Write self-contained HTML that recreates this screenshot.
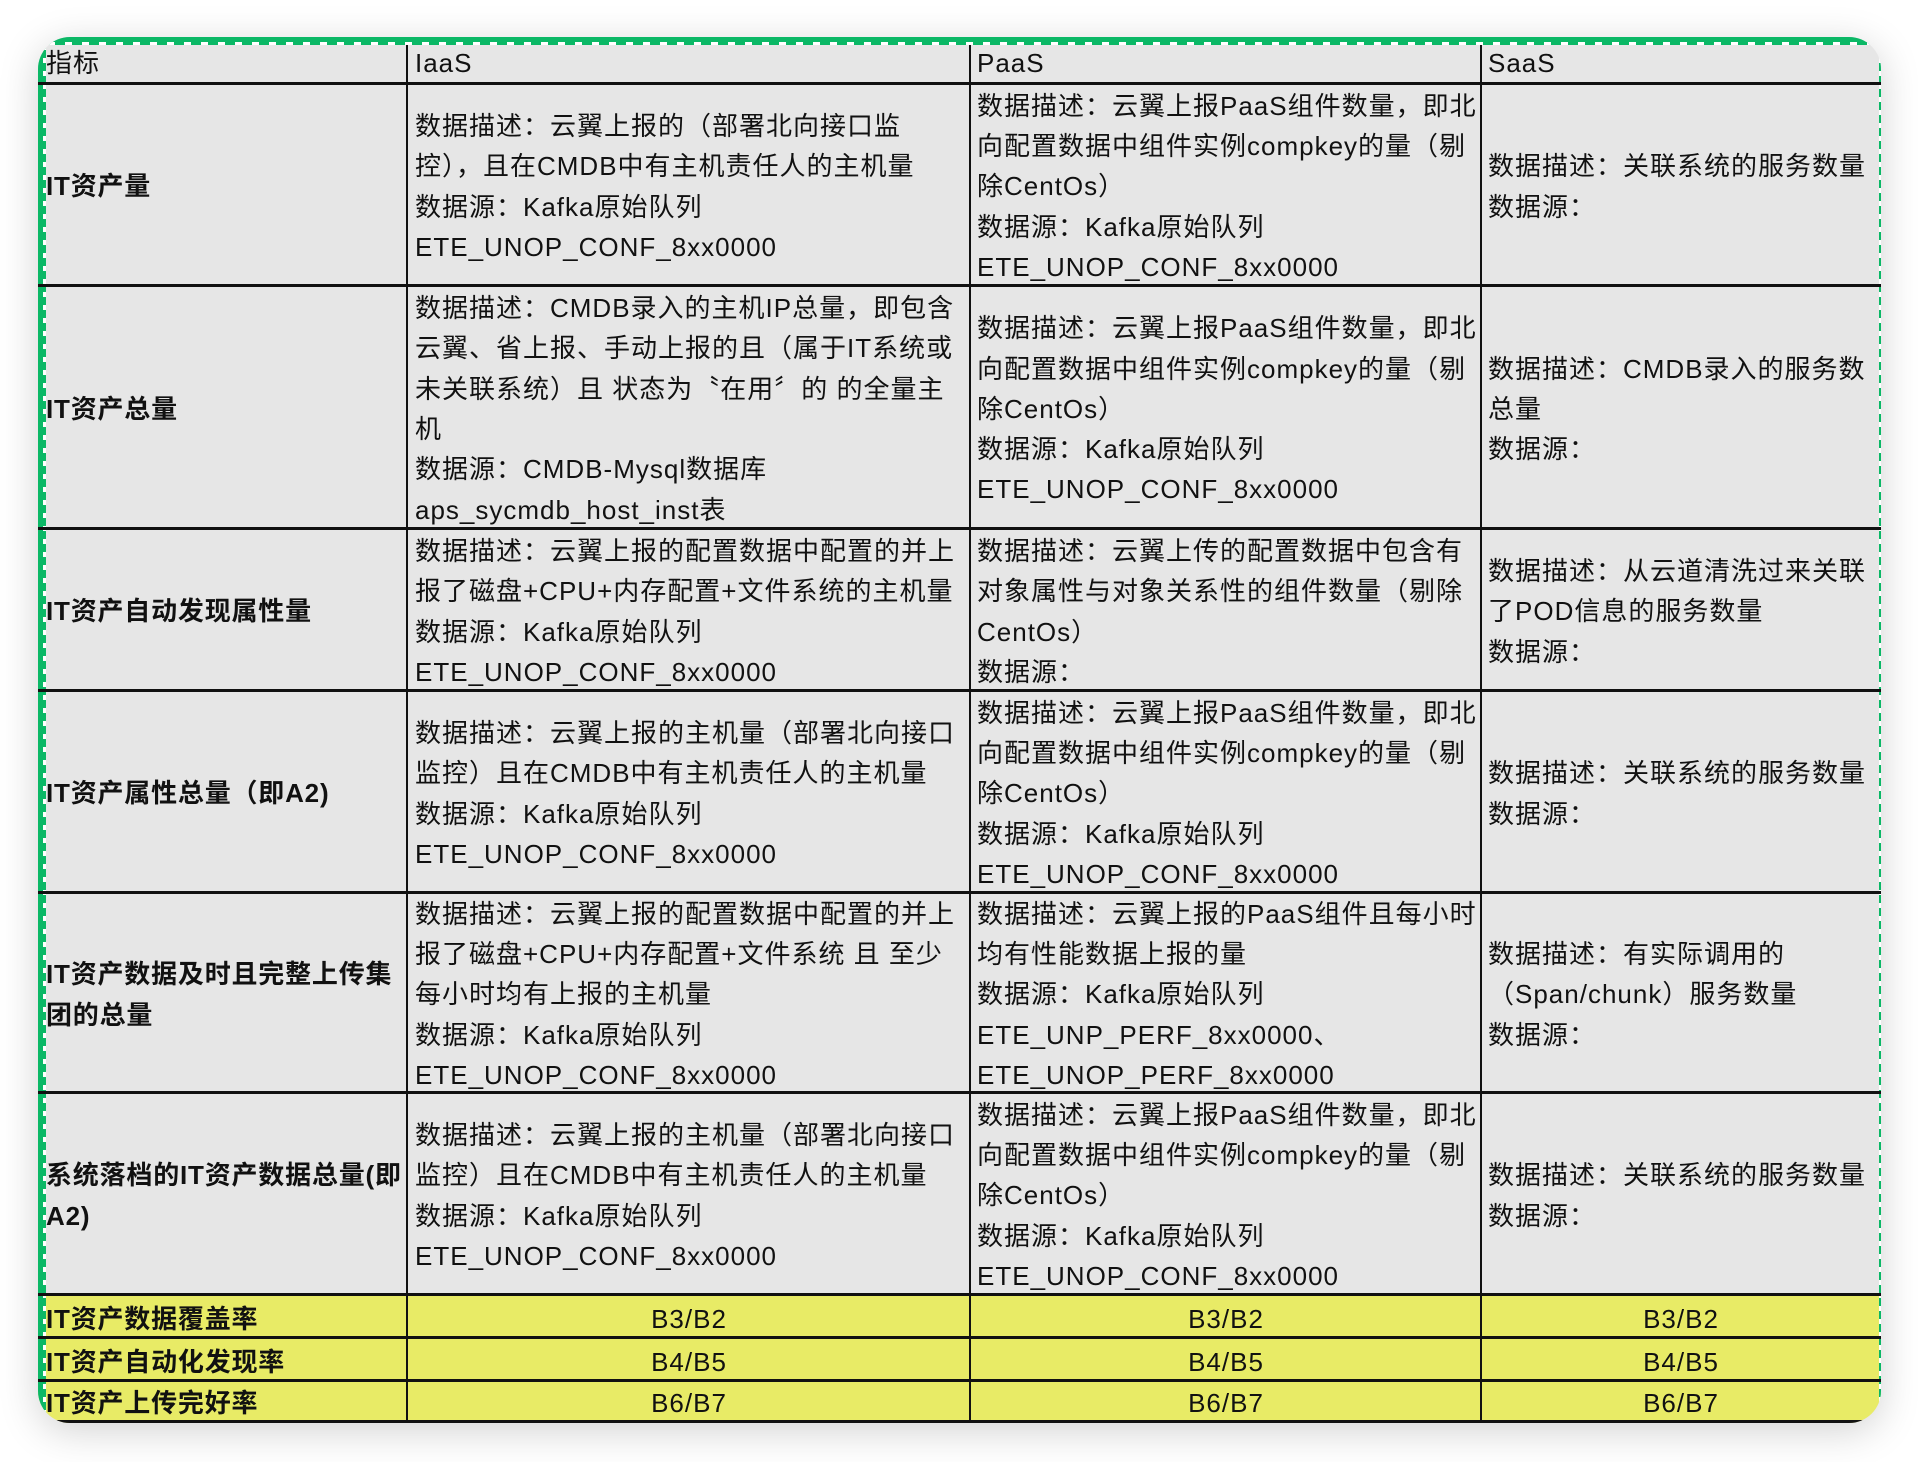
<!DOCTYPE html>
<html><head><meta charset="utf-8"><style>
body{margin:0;width:1918px;height:1462px;background:#fff;position:relative;overflow:hidden;font-family:"Liberation Sans","Noto Sans CJK SC",sans-serif;color:#111;}
.card{position:absolute;left:38px;top:37px;width:1843px;height:1386px;border-radius:32px;overflow:hidden;background:#e6e6e6;box-shadow:0 8px 40px rgba(0,0,0,.18);}
.gl{position:absolute;left:0;top:0;width:8px;height:100%;background:#0bb866;}
.gl:after{content:"";position:absolute;left:5px;top:0;width:3px;height:100%;background:repeating-linear-gradient(#0bb866 0 8px,#fff 8px 13px);}
.gt{position:absolute;left:0;top:0;width:100%;height:8px;background:#0bb866;}
.gt:after{content:"";position:absolute;top:5px;left:0;height:3px;width:100%;background:repeating-linear-gradient(90deg,#0bb866 0 10px,#fff 10px 17px);}
.gr{position:absolute;right:0;top:0;width:2px;height:100%;background:repeating-linear-gradient(#0bb866 0 8px,#fff 8px 13px);}
.y{position:absolute;left:0;width:100%;background:#e8eb66;}
.h{position:absolute;left:0;width:100%;height:3px;background:#111;}
.v{position:absolute;width:2px;background:#111;}
.c{position:absolute;display:flex;flex-direction:column;justify-content:center;font-size:26px;line-height:40.3px;white-space:nowrap;letter-spacing:1px;padding-top:3px;box-sizing:border-box;}
.b{font-weight:bold;letter-spacing:.8px;}
.ctr{align-items:center;}
</style></head><body>
<div class="card">
<div class="y" style="top:1257px;height:129px"></div>
<div class="gt"></div><div class="gl"></div><div class="gr"></div>
<div class="h" style="top:45px"></div>
<div class="h" style="top:247px"></div>
<div class="h" style="top:490px"></div>
<div class="h" style="top:652px"></div>
<div class="h" style="top:854px"></div>
<div class="h" style="top:1054px"></div>
<div class="h" style="top:1256px"></div>
<div class="h" style="top:1299px"></div>
<div class="h" style="top:1342px"></div>
<div class="h" style="top:1383px"></div>
<div class="v" style="left:368px;top:8px;height:1378px"></div>
<div class="v" style="left:931px;top:8px;height:1378px"></div>
<div class="v" style="left:1442px;top:8px;height:1378px"></div>
</div>
<!-- header -->
<div class="c" style="left:46px;top:40px;height:43px">指标</div>
<div class="c" style="left:415px;top:40px;height:43px">IaaS</div>
<div class="c" style="left:977px;top:40px;height:43px">PaaS</div>
<div class="c" style="left:1488px;top:40px;height:43px">SaaS</div>
<!-- row1 -->
<div class="c b" style="left:46px;top:85px;height:200px">IT资产量</div>
<div class="c" style="left:415px;top:85px;height:200px">数据描述：云翼上报的（部署北向接口监<br>控），且在CMDB中有主机责任人的主机量<br>数据源：Kafka原始队列<br>ETE_UNOP_CONF_8xx0000</div>
<div class="c" style="left:977px;top:85px;height:200px">数据描述：云翼上报PaaS组件数量，即北<br>向配置数据中组件实例compkey的量（剔<br>除CentOs）<br>数据源：Kafka原始队列<br>ETE_UNOP_CONF_8xx0000</div>
<div class="c" style="left:1488px;top:85px;height:200px">数据描述：关联系统的服务数量<br>数据源：</div>
<!-- row2 -->
<div class="c b" style="left:46px;top:287px;height:241px">IT资产总量</div>
<div class="c" style="left:415px;top:287px;height:241px">数据描述：CMDB录入的主机IP总量，即包含<br>云翼、省上报、手动上报的且（属于IT系统或<br>未关联系统）且 状态为〝在用〞的 的全量主<br>机<br>数据源：CMDB-Mysql数据库<br>aps_sycmdb_host_inst表</div>
<div class="c" style="left:977px;top:287px;height:241px">数据描述：云翼上报PaaS组件数量，即北<br>向配置数据中组件实例compkey的量（剔<br>除CentOs）<br>数据源：Kafka原始队列<br>ETE_UNOP_CONF_8xx0000</div>
<div class="c" style="left:1488px;top:287px;height:241px">数据描述：CMDB录入的服务数<br>总量<br>数据源：</div>
<!-- row3 -->
<div class="c b" style="left:46px;top:530px;height:160px">IT资产自动发现属性量</div>
<div class="c" style="left:415px;top:530px;height:160px">数据描述：云翼上报的配置数据中配置的并上<br>报了磁盘+CPU+内存配置+文件系统的主机量<br>数据源：Kafka原始队列<br>ETE_UNOP_CONF_8xx0000</div>
<div class="c" style="left:977px;top:530px;height:160px">数据描述：云翼上传的配置数据中包含有<br>对象属性与对象关系性的组件数量（剔除<br>CentOs）<br>数据源：</div>
<div class="c" style="left:1488px;top:530px;height:160px">数据描述：从云道清洗过来关联<br>了POD信息的服务数量<br>数据源：</div>
<!-- row4 -->
<div class="c b" style="left:46px;top:692px;height:200px">IT资产属性总量（即A2)</div>
<div class="c" style="left:415px;top:692px;height:200px">数据描述：云翼上报的主机量（部署北向接口<br>监控）且在CMDB中有主机责任人的主机量<br>数据源：Kafka原始队列<br>ETE_UNOP_CONF_8xx0000</div>
<div class="c" style="left:977px;top:692px;height:200px">数据描述：云翼上报PaaS组件数量，即北<br>向配置数据中组件实例compkey的量（剔<br>除CentOs）<br>数据源：Kafka原始队列<br>ETE_UNOP_CONF_8xx0000</div>
<div class="c" style="left:1488px;top:692px;height:200px">数据描述：关联系统的服务数量<br>数据源：</div>
<!-- row5 -->
<div class="c b" style="left:46px;top:894px;height:198px">IT资产数据及时且完整上传集<br>团的总量</div>
<div class="c" style="left:415px;top:894px;height:198px">数据描述：云翼上报的配置数据中配置的并上<br>报了磁盘+CPU+内存配置+文件系统 且 至少<br>每小时均有上报的主机量<br>数据源：Kafka原始队列<br>ETE_UNOP_CONF_8xx0000</div>
<div class="c" style="left:977px;top:894px;height:198px">数据描述：云翼上报的PaaS组件且每小时<br>均有性能数据上报的量<br>数据源：Kafka原始队列<br>ETE_UNP_PERF_8xx0000、<br>ETE_UNOP_PERF_8xx0000</div>
<div class="c" style="left:1488px;top:894px;height:198px">数据描述：有实际调用的<br>（Span/chunk）服务数量<br>数据源：</div>
<!-- row6 -->
<div class="c b" style="left:46px;top:1094px;height:200px">系统落档的IT资产数据总量(即<br>A2)</div>
<div class="c" style="left:415px;top:1094px;height:200px">数据描述：云翼上报的主机量（部署北向接口<br>监控）且在CMDB中有主机责任人的主机量<br>数据源：Kafka原始队列<br>ETE_UNOP_CONF_8xx0000</div>
<div class="c" style="left:977px;top:1094px;height:200px">数据描述：云翼上报PaaS组件数量，即北<br>向配置数据中组件实例compkey的量（剔<br>除CentOs）<br>数据源：Kafka原始队列<br>ETE_UNOP_CONF_8xx0000</div>
<div class="c" style="left:1488px;top:1094px;height:200px">数据描述：关联系统的服务数量<br>数据源：</div>
<!-- yellow rows -->
<div class="c b" style="left:46px;top:1296px;height:43px">IT资产数据覆盖率</div>
<div class="c ctr" style="left:408px;width:562px;top:1296px;height:43px">B3/B2</div>
<div class="c ctr" style="left:971px;width:510px;top:1296px;height:43px">B3/B2</div>
<div class="c ctr" style="left:1482px;width:398px;top:1296px;height:43px">B3/B2</div>
<div class="c b" style="left:46px;top:1339px;height:43px">IT资产自动化发现率</div>
<div class="c ctr" style="left:408px;width:562px;top:1339px;height:43px">B4/B5</div>
<div class="c ctr" style="left:971px;width:510px;top:1339px;height:43px">B4/B5</div>
<div class="c ctr" style="left:1482px;width:398px;top:1339px;height:43px">B4/B5</div>
<div class="c b" style="left:46px;top:1381px;height:42px">IT资产上传完好率</div>
<div class="c ctr" style="left:408px;width:562px;top:1381px;height:42px">B6/B7</div>
<div class="c ctr" style="left:971px;width:510px;top:1381px;height:42px">B6/B7</div>
<div class="c ctr" style="left:1482px;width:398px;top:1381px;height:42px">B6/B7</div>
</body></html>
